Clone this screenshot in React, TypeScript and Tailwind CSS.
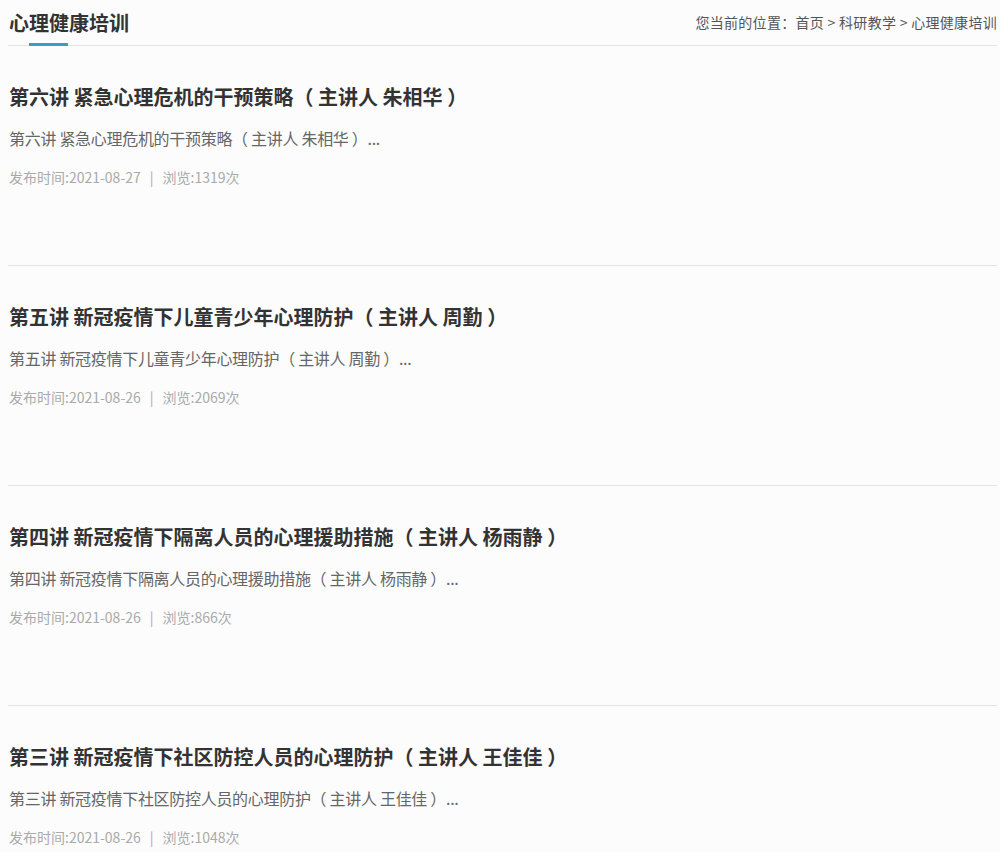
const font = "font-['Microsoft_YaHei','Noto_Sans_CJK_SC',sans-serif]";

type Lecture = { title: string; date: string; views: number };

const lectures: Lecture[] = [
  { title: "第六讲 紧急心理危机的干预策略（ 主讲人 朱相华 ）", date: "2021-08-27", views: 1319 },
  { title: "第五讲 新冠疫情下儿童青少年心理防护（ 主讲人 周勤 ）", date: "2021-08-26", views: 2069 },
  { title: "第四讲 新冠疫情下隔离人员的心理援助措施（ 主讲人 杨雨静 ）", date: "2021-08-26", views: 866 },
  { title: "第三讲 新冠疫情下社区防控人员的心理防护（ 主讲人 王佳佳 ）", date: "2021-08-26", views: 1048 },
];

function LectureItem({ item }: { item: Lecture }) {
  return (
    <li className="border-b border-[#e3e3e3] pt-[36px] pb-[73px] pl-[1px]">
      <h3 className="text-[20px] leading-[30px] font-bold text-[#333]">{item.title}</h3>
      <p className="mt-[11px] text-[16px] tracking-[-0.3px] leading-[30px] text-[#666]">{item.title}...</p>
      <div className="mt-[9px] text-[14px] leading-[30px] text-[#aaa]">
        发布时间:{item.date}
        <span className="mx-[9px]">|</span>
        浏览:{item.views}次
      </div>
    </li>
  );
}

export default function App() {
  return (
    <div className={`${font} w-[1000px] h-[852px] overflow-hidden bg-[#fcfcfc] pl-[8px] pr-[3px]`}>
      <div className="flex items-end justify-between border-b border-[#e3e3e3] h-[46px] pb-[7px]">
        <h2 className="relative text-[20px] leading-[30px] font-bold text-[#333] pl-[1px]">
          心理健康培训
          <span className="absolute left-[21px] bottom-[-8px] h-[3px] w-[39px] bg-[#3b9bc4]" />
        </h2>
        <div className="text-[14px] tracking-[0.3px] leading-[30px] text-[#555] mb-[1px]">
          您当前的位置：首页 &gt; 科研教学 &gt; 心理健康培训
        </div>
      </div>
      <ul>
        {lectures.map((l) => (
          <LectureItem key={l.title} item={l} />
        ))}
      </ul>
    </div>
  );
}
